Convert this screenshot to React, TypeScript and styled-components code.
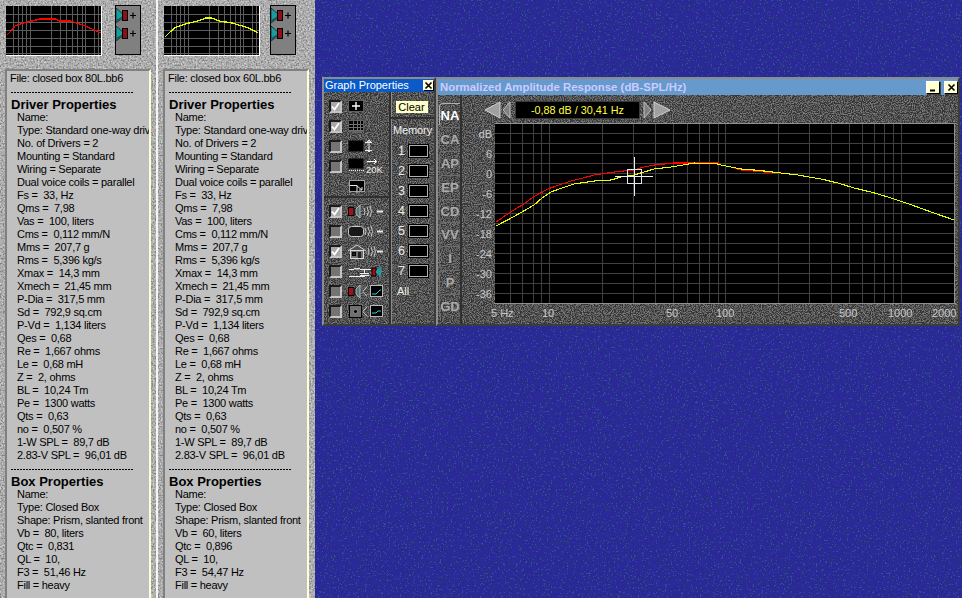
import styled, { createGlobalStyle } from "styled-components";

// speckle textures, drawn with an svg noise filter
const noise = (table: [string, string, string], freq: number, seed: number) => {
  const svg = `<svg xmlns='http://www.w3.org/2000/svg' width='300' height='300'><filter id='n' x='0' y='0' width='100%' height='100%' color-interpolation-filters='sRGB'><feTurbulence type='fractalNoise' baseFrequency='${freq}' numOctaves='2' seed='${seed}' stitchTiles='stitch'/><feColorMatrix type='matrix' values='2.2 0 0 0 -0.6 2.2 0 0 0 -0.6 2.2 0 0 0 -0.6 0 0 0 0 1'/><feComponentTransfer><feFuncR type='discrete' tableValues='${table[0]}'/><feFuncG type='discrete' tableValues='${table[1]}'/><feFuncB type='discrete' tableValues='${table[2]}'/></feComponentTransfer></filter><rect width='300' height='300' filter='url(#n)' shape-rendering='crispEdges'/></svg>`;
  return `url("data:image/svg+xml,${encodeURIComponent(svg)}")`;
};

const blueTexture = noise(["0.12 0.15 0.17 0.17 0.17 0.17 0.17 0.18 0.2", "0.24 0.16 0.16 0.16 0.16 0.16 0.16 0.18 0.3", "0.42 0.52 0.6 0.6 0.6 0.6 0.6 0.62 0.62"], 0.55, 3);
const stoneTexture = noise(["0.52 0.58 0.62 0.66 0.68 0.7 0.72 0.75 0.8", "0.52 0.58 0.62 0.66 0.68 0.7 0.72 0.75 0.8", "0.52 0.58 0.62 0.66 0.68 0.7 0.72 0.75 0.8"], 0.6, 8);
const darkTexture = noise(["0.2 0.2 0.22 0.26 0.34 0.38 0.4 0.44 0.5", "0.2 0.2 0.22 0.26 0.34 0.38 0.4 0.44 0.5", "0.2 0.2 0.22 0.26 0.34 0.38 0.4 0.44 0.5"], 0.9, 5);

const GlobalStyle = createGlobalStyle`
  html, body {
    margin: 0;
    padding: 0;
    background: #2c2c9c;
    overflow: hidden;
  }
  body {
    font-family: "Liberation Sans", Arial, sans-serif;
    font-size: 12px;
  }
`;

const Page = styled.div`
  display: flex;
  width: 962px;
  height: 598px;
  overflow: hidden;
  background: #2c2c9c ${blueTexture};
`;

const Column = styled.section<{ $last?: boolean }>`
  width: ${(p) => (p.$last ? "157px" : "158px")};
  height: 598px;
  box-sizing: border-box;
  padding: 5px 0 0 5px;
  background: #b0b0b0 ${stoneTexture};
  border-right: ${(p) => (p.$last ? "none" : "2px solid #f4f4f4")};
  flex-shrink: 0;
`;

const PreviewRow = styled.div`
  display: flex;
  align-items: flex-start;
  height: 64px;
`;

const Thumb = styled.svg`
  display: block;
  margin-top: 1px;
  margin-left: 1px;
  border-right: 1px solid #fff;
  border-bottom: 1px solid #fff;
`;

const PortBox = styled.svg<{ $gap: number }>`
  display: block;
  margin-left: ${(p) => p.$gap}px;
`;

const Sheet = styled.div`
  width: 146px;
  height: 540px;
  box-sizing: border-box;
  padding: 1px 0 0 3px;
  background: #c0c0c0;
  border-top: 2px solid #808080;
  border-left: 2px solid #808080;
  border-right: 2px solid #ffffd8;
  overflow: hidden;
  color: #000;
`;

const Line = styled.div<{ $indent?: boolean }>`
  height: 13px;
  line-height: 13px;
  font-size: 11px;
  letter-spacing: -0.26px;
  white-space: pre;
  padding-left: ${(p) => (p.$indent ? "7px" : "0")};
`;

const Heading = styled.div`
  height: 13px;
  line-height: 13px;
  font-size: 13px;
  font-weight: bold;
  white-space: pre;
  padding-left: 1px;
`;

const DashRule = styled.div`
  height: 13px;
  width: 122px;
  margin-left: 1px;
  background: repeating-linear-gradient(90deg, #000 0 2px, transparent 2px 3px) left 7px / 100% 1px no-repeat;
`;

const PropsWindow = styled.div`
  position: absolute;
  left: 322px;
  top: 77px;
  width: 114px;
  height: 249px;
  box-sizing: border-box;
  display: flex;
  flex-direction: column;
  background: #585858 ${darkTexture};
  border: 2px solid #3c3c3c;
  border-top-color: #8c8c8c;
  border-left-color: #8c8c8c;
  color: #e8e8e8;
`;

const PropsTitle = styled.div`
  display: flex;
  align-items: center;
  justify-content: space-between;
  height: 13px;
  flex-shrink: 0;
  padding-left: 1px;
  background: #0a5ac8;
  color: #fff;
  font-size: 11px;
  line-height: 13px;
`;

const TitleButton = styled.button<{ $big?: boolean }>`
  display: flex;
  align-items: center;
  justify-content: center;
  width: ${(p) => (p.$big ? "14px" : "11px")};
  height: ${(p) => (p.$big ? "13px" : "11px")};
  padding: 0;
  background: #ffffd0;
  color: #000;
  border: 1px solid #000;
  border-top-color: #fff;
  border-left-color: #fff;
  box-shadow: ${(p) => (p.$big ? "1px 1px 0 #404040" : "none")};
`;

const PropsBody = styled.div`
  flex: 1;
  display: flex;
  min-height: 0;
`;

const OptionColumn = styled.div`
  width: 65px;
  display: flex;
  flex-direction: column;
  border-right: 2px solid #303030;
  box-shadow: 1px 0 0 #8a8a8a;
`;

const OptionGroup = styled.div<{ $top?: boolean }>`
  display: flex;
  flex-direction: column;
  padding: ${(p) => (p.$top ? "4px" : "3px")} 0 0 5px;
  height: ${(p) => (p.$top ? "106px" : "auto")};
  box-sizing: border-box;
  border-bottom: ${(p) => (p.$top ? "2px solid #303030" : "none")};
`;

const OptionRow = styled.div`
  display: flex;
  align-items: center;
  height: 20px;
`;

const Check = styled.div<{ $empty?: boolean }>`
  width: 13px;
  height: 13px;
  box-sizing: border-box;
  flex-shrink: 0;
  display: flex;
  align-items: center;
  justify-content: center;
  background: ${(p) => (p.$empty ? "#747474" : "#a8a8a8")};
  border: 2px solid #c4c4c4;
  border-top-color: #1c1c1c;
  border-left-color: #1c1c1c;
`;

const OptionIcon = styled.svg<{ $blank?: boolean }>`
  display: block;
  flex-shrink: 0;
  margin-left: ${(p) => (p.$blank ? "20px" : "6px")};
`;

const MemoryColumn = styled.div`
  flex: 1;
  display: flex;
  flex-direction: column;
`;

const ClearArea = styled.div`
  height: 27px;
  box-sizing: border-box;
  display: flex;
  justify-content: center;
  padding: 9px 2px 0 0;
  border-bottom: 2px solid #303030;
`;

const ClearButton = styled.button`
  width: 32px;
  height: 12px;
  padding: 0;
  border: none;
  background: #ffffc8;
  color: #000;
  font-family: inherit;
  font-size: 11px;
  line-height: 12px;
`;

const MemoryLabel = styled.div`
  height: 22px;
  line-height: 22px;
  text-align: center;
  font-size: 11px;
  letter-spacing: -0.1px;
  color: #f0f0f0;
`;

const MemoryRow = styled.div`
  display: flex;
  align-items: center;
  height: 20px;
  padding-left: 7px;
  gap: 4px;
  font-size: 12.5px;
`;

const MemorySlot = styled.div`
  width: 19px;
  height: 12px;
  box-sizing: border-box;
  background: #000;
  border: 1px solid #b0b0b0;
  outline: 1px solid #000;
`;

const MemoryAll = styled.div`
  padding: 4px 0 0 6px;
  font-size: 11px;
  color: #f0f0f0;
`;

const GraphWindow = styled.div`
  position: absolute;
  left: 436px;
  top: 77px;
  width: 524px;
  height: 249px;
  box-sizing: border-box;
  display: flex;
  flex-direction: column;
  background: #585858 ${darkTexture};
  border: 2px solid #3c3c3c;
  border-top-color: #8c8c8c;
  border-left-color: #8c8c8c;
`;

const GraphTitle = styled.div`
  display: flex;
  align-items: center;
  gap: 4px;
  height: 16px;
  flex-shrink: 0;
  padding: 0 0 0 2px;
  background: #6699cc;
`;

const GraphTitleText = styled.div`
  flex: 1;
  color: #ccccff;
  font-size: 11.4px;
  font-weight: bold;
  white-space: nowrap;
`;

const GraphBody = styled.div`
  flex: 1;
  display: flex;
  min-height: 0;
`;

const TabStrip = styled.div`
  width: 22px;
  flex-shrink: 0;
  display: flex;
  flex-direction: column;
  padding-top: 8px;
  border-right: 2px solid #303030;
`;

const Tab = styled.div<{ $active?: boolean }>`
  height: 23.9px;
  margin-left: 1px;
  box-sizing: border-box;
  line-height: 23px;
  text-align: center;
  font-size: 13px;
  font-weight: bold;
  color: ${(p) => (p.$active ? "#ffffff" : "#aaaaaa")};
  border-top: 1px solid ${(p) => (p.$active ? "#b0b0b0" : "#6c6c6c")};
  border-left: 1px solid ${(p) => (p.$active ? "#b0b0b0" : "#6c6c6c")};
  border-radius: 4px 0 0 4px;
`;

const GraphMain = styled.div`
  flex: 1;
  display: flex;
  flex-direction: column;
  min-width: 0;
`;

const NavRow = styled.div`
  display: flex;
  align-items: center;
  height: 26px;
  box-sizing: border-box;
  padding: 3px 0 0 22px;
  flex-shrink: 0;
`;

const NavArrow = styled.svg<{ $gap?: number }>`
  display: block;
  flex-shrink: 0;
  margin-left: ${(p) => p.$gap ?? 0}px;
`;

const Readout = styled.div`
  width: 125px;
  height: 18px;
  margin: 0 2px 0 3px;
  box-sizing: border-box;
  background: #000;
  border: 1px solid #3a3a3a;
  color: #ffff40;
  font-size: 10.8px;
  line-height: 16px;
  text-align: center;
  white-space: nowrap;
`;

const ChartSvg = styled.svg`
  display: block;
  flex-shrink: 0;
`;

const ChartLabel = styled.text`
  fill: #c8c8c8;
  font-family: "Liberation Sans", Arial, sans-serif;
  font-size: 11px;
`;

const driverRows = [
  "Name:",
  "Type: Standard one-way driver",
  "No. of Drivers = 2",
  "Mounting = Standard",
  "Wiring = Separate",
  "Dual voice coils = parallel",
  "Fs =  33, Hz",
  "Qms =  7,98",
  "Vas =  100, liters",
  "Cms =  0,112 mm/N",
  "Mms =  207,7 g",
  "Rms =  5,396 kg/s",
  "Xmax =  14,3 mm",
  "Xmech =  21,45 mm",
  "P-Dia =  317,5 mm",
  "Sd =  792,9 sq.cm",
  "P-Vd =  1,134 liters",
  "Qes =  0,68",
  "Re =  1,667 ohms",
  "Le =  0,68 mH",
  "Z =  2, ohms",
  "BL =  10,24 Tm",
  "Pe =  1300 watts",
  "Qts =  0,63",
  "no =  0,507 %",
  "1-W SPL =  89,7 dB",
  "2.83-V SPL =  96,01 dB",
];

interface BoxFile {
  file: string;
  vb: string;
  qtc: string;
  f3: string;
  color: string;
  curve: string;
}

const files: BoxFile[] = [
  {
    file: "File: closed box 80L.bb6",
    vb: "80",
    qtc: "0,831",
    f3: "51,46",
    color: "#ff0000",
    curve: "1,29 5,25 9,20 17,17 26,15 34,13 49,13 54,15 64,15 77,19 86,23 95,27",
  },
  {
    file: "File: closed box 60L.bb6",
    vb: "60",
    qtc: "0,896",
    f3: "54,47",
    color: "#e4ff00",
    curve: "1,31 6,26 12,21 25,17 34,15 42,12 48,12 55,15 68,17 85,22 94,27",
  },
];

const redCurve =
  "495,222 508,213 521,205 534,196 547,189 558,185 570,181 582,178 593,175 613,172 633,170 643,167 653,165 663,164 673,163 693,163 717,163 720,165 730,167 740,170 753,171 763,172 780,173";
const yellowCurve =
  "495,226 514,216 533,205 541,198 550,192 561,188 573,184 593,181 610,180 620,177 633,175 643,172 653,169 670,167 682,165 693,163 717,164 720,165 730,167 740,169 753,170 763,171 780,173 797,175 808,177 820,179 837,183 853,188 870,192 887,197 908,204 930,212 953,220";

const vLines = [509, 521, 532, 540, 548, 601, 632, 654, 672, 686, 698, 708, 717, 724, 777, 808, 830, 848, 861, 873, 883, 892, 900];
const hLines = Array.from({ length: 17 }, (_, i) => 134 + i * 10);
const dbLabels: [string, number][] = [
  ["dB", 134],
  ["6", 154],
  ["0", 174],
  ["-6", 194],
  ["-12", 214],
  ["-18", 234],
  ["-24", 254],
  ["-30", 274],
  ["-36", 294],
];
const hzLabels: [string, number][] = [
  ["5 Hz", 490],
  ["10", 541],
  ["50", 665],
  ["100", 715],
  ["500", 838],
  ["1000", 887],
  ["2000", 931],
];
const tabs = ["NA", "CA", "AP", "EP", "CD", "VV", "I", "P", "GD"];

const ThumbChart = ({ color, curve }: { color: string; curve: string }) => {
  const xs = [7, 12, 16, 20, 24, 45, 54, 60, 66, 71, 76, 79, 88, 92];
  const ys = [8, 16, 24, 32, 40, 47];
  return (
    <Thumb width="95" height="49" viewBox="0 0 95 49" shapeRendering="crispEdges">
      <rect width="95" height="49" fill="#000" />
      {xs.map((x) => (
        <path key={x} d={`M${x} 0V49`} stroke="#5c5c5c" />
      ))}
      {ys.map((y) => (
        <path key={y} d={`M0 ${y}H95`} stroke="#5c5c5c" />
      ))}
      <polyline points={curve} fill="none" stroke={color} strokeWidth="1.3" />
    </Thumb>
  );
};

const Driver = ({ y }: { y: number }) => (
  <g transform={`translate(0 ${y})`}>
    <path d="M1 0L8 6V10L1 15Z" fill="#1c9c9c" stroke="#000" strokeWidth=".6" />
    <path d="M1 15L8 10V8L1 12Z" fill="#205858" />
    <rect x="7.500" y="2.500" width="5" height="10" fill="#8c1018" stroke="#000" />
    <path d="M15 7.500h6M18 4.500v6" stroke="#000" strokeWidth="1.200" />
  </g>
);

const Ports = ({ gap }: { gap: number }) => (
  <PortBox $gap={gap} width="26" height="50" viewBox="0 0 26 50">
    <rect x=".5" y=".5" width="25" height="49" fill="#808080" stroke="#000" />
    <Driver y={3} />
    <Driver y={21} />
  </PortBox>
);

const Waves = ({ x }: { x: number }) => (
  <g fill="none" stroke="#c8c8c8">
    <path d={`M${x} 4q2 3.500 0 7M${x + 3} 3q3 4.500 0 9M${x + 6} 2q3 5.500 0 11`} />
    <path d="M29 7.500h6" stroke="#e8e8e8" strokeWidth="2" />
  </g>
);

const Speaker = () => (
  <g>
    <rect x=".5" y="3.500" width="5" height="8" fill="#a01018" stroke="#000" />
    <rect x="5" y="4" width="3" height="7" fill="#202020" />
    <path d="M8 5l4-4v13l-4-4z" fill="#587878" stroke="#c8c8c8" strokeWidth=".8" />
  </g>
);

const MiniGraph = ({ low }: { low?: boolean }) => (
  <g>
    <rect x="22.500" y="1.500" width="12" height="11" fill="#000" stroke="#b8b8b8" />
    <path d={low ? "M24 9h4l2-2h3" : "M24 10h4l4-4h1"} stroke="#20d8f0" fill="none" />
  </g>
);

const Wedge = () => <path d="M19 2.500l-4 5 4 5" stroke="#c8c8c8" fill="none" />;

const icons: Record<string, React.ReactNode> = {
  sealed: (
    <>
      <Speaker />
      <Waves x={16} />
    </>
  ),
  vented: (
    <>
      <rect x=".5" y="2.500" width="15" height="10" rx="3" fill="#181818" stroke="#c8c8c8" />
      <Waves x={17} />
    </>
  ),
  room: (
    <>
      <path d="M0 7L9 1L18 7" fill="#505050" stroke="#d8d8d8" />
      <rect x="2.500" y="6.500" width="13" height="8" fill="#707070" stroke="#d8d8d8" />
      <rect x="4.500" y="8.500" width="3" height="3" fill="#202020" stroke="#000" />
      <rect x="10" y="8" width="3" height="6" fill="#202020" />
      <Waves x={20} />
    </>
  ),
  crossover: (
    <>
      <path d="M1 5.500h5q1-3 2 0q1-3 2 0q1-3 2 0h11M1 12.500h16M16.500 6v3M12 9.500h9M12 11.500h9M16.500 12v1" fill="none" stroke="#f0f0f0" />
      <rect x="24" y="4" width="4" height="8" fill="#a01018" stroke="#000" />
      <path d="M28 7l5-5v11l-5-4z" fill="#1c9c9c" />
    </>
  ),
  excursion: (
    <>
      <Speaker />
      <Wedge />
      <MiniGraph />
    </>
  ),
  port: (
    <>
      <rect x="1.500" y="1.500" width="12" height="12" fill="#707070" stroke="#000" />
      <circle cx="7.500" cy="7.500" r="2" fill="#000" stroke="#b0b0b0" strokeWidth=".6" />
      <Wedge />
      <MiniGraph low />
    </>
  ),
};

const topIcons: Record<string, React.ReactNode> = {
  cross: (
    <>
      <rect x="0.5" y="1.500" width="15" height="11" fill="#000" stroke="#606060" />
      <path d="M8 3v8M4 7h8" stroke="#fff" strokeWidth="1.400" />
    </>
  ),
  grid: (
    <>
      <rect x="0.5" y="1.500" width="15" height="11" fill="#000" stroke="#606060" />
      <path d="M1 5.500h14M1 8.500h14M1 11.500h14M5.500 2v10M9.500 2v10M12.500 2v10" stroke="#707070" />
    </>
  ),
  scaleY: (
    <>
      <rect x="0.5" y="1.500" width="15" height="11" fill="#000" />
      <path d="M17 3.500h7M17 11.500h7M21 1v12M19 3l2-2 2 2M19 11l2 2 2-2" stroke="#e8e8e8" fill="none" />
    </>
  ),
  scaleX: (
    <>
      <rect x="0.5" y="0.500" width="15" height="10" fill="#000" />
      <path d="M1 12.500h15" stroke="#e8e8e8" strokeDasharray="1 1" />
      <path d="M19 3.500h9M26 1l2.500 2.500-2.500 2.500" stroke="#fff" fill="none" />
      <text x="18" y="15" fill="#f0f0f0" fontFamily="Liberation Sans" fontSize="9.500">20K</text>
    </>
  ),
  zoom: (
    <>
      <rect x="0.5" y="1.500" width="15" height="11" fill="#000" stroke="#a0a0a0" />
      <path d="M1 6.500h7v6M8 7l5 4M13 8v3h-3" stroke="#e8e8e8" fill="none" />
    </>
  ),
};

const CheckMark = () => (
  <svg width="9" height="9" viewBox="0 0 9 9">
    <path d="M1 4.500L3.500 7.500L8 1" fill="none" stroke="#fff" strokeWidth="1.800" />
  </svg>
);

const Close = () => (
  <svg width="9" height="9" viewBox="0 0 9 9">
    <path d="M1.500 1.500L7.500 7.500M7.500 1.500L1.500 7.500" stroke="#000" strokeWidth="1.600" />
  </svg>
);

const Minimize = () => (
  <svg width="9" height="9" viewBox="0 0 9 9">
    <path d="M1 7.500H6" stroke="#000" strokeWidth="2" />
  </svg>
);

const BoxColumn = ({ data, last }: { data: BoxFile; last?: boolean }) => (
  <Column $last={last}>
    <PreviewRow>
      <ThumbChart color={data.color} curve={data.curve} />
      <Ports gap={last ? 10 : 13} />
    </PreviewRow>
    <Sheet>
      <Line>{data.file}</Line>
      <DashRule />
      <Heading>Driver Properties</Heading>
      {driverRows.map((row) => (
        <Line $indent key={row}>
          {row}
        </Line>
      ))}
      <DashRule />
      <Heading>Box Properties</Heading>
      <Line $indent>Name:</Line>
      <Line $indent>Type: Closed Box</Line>
      <Line $indent>Shape: Prism, slanted front</Line>
      <Line $indent>{`Vb =  ${data.vb}, liters`}</Line>
      <Line $indent>{`Qtc =  ${data.qtc}`}</Line>
      <Line $indent>{"QL =  10,"}</Line>
      <Line $indent>{`F3 =  ${data.f3} Hz`}</Line>
      <Line $indent>Fill = heavy</Line>
    </Sheet>
  </Column>
);

const App = () => {
  return (
    <Page>
      <GlobalStyle />
      <BoxColumn data={files[0]} />
      <BoxColumn data={files[1]} last />

      <PropsWindow>
        <PropsTitle>
          Graph Properties
          <TitleButton>
            <Close />
          </TitleButton>
        </PropsTitle>
        <PropsBody>
          <OptionColumn>
            <OptionGroup $top>
              <OptionRow>
                <Check>
                  <CheckMark />
                </Check>
                <OptionIcon width="30" height="14" viewBox="0 0 30 14">{topIcons.cross}</OptionIcon>
              </OptionRow>
              <OptionRow>
                <Check>
                  <CheckMark />
                </Check>
                <OptionIcon width="30" height="14" viewBox="0 0 30 14">{topIcons.grid}</OptionIcon>
              </OptionRow>
              <OptionRow>
                <Check $empty />
                <OptionIcon width="30" height="14" viewBox="0 0 30 14">{topIcons.scaleY}</OptionIcon>
              </OptionRow>
              <OptionRow>
                <Check $empty />
                <OptionIcon width="36" height="16" viewBox="0 0 36 16">{topIcons.scaleX}</OptionIcon>
              </OptionRow>
              <OptionRow>
                <OptionIcon $blank width="30" height="14" viewBox="0 0 30 14">{topIcons.zoom}</OptionIcon>
              </OptionRow>
            </OptionGroup>
            <OptionGroup>
              {Object.keys(icons).map((name) => (
                <OptionRow key={name}>
                  {name === "sealed" || name === "room" ? (
                    <Check>
                      <CheckMark />
                    </Check>
                  ) : (
                    <Check $empty />
                  )}
                  <OptionIcon width="36" height="15" viewBox="0 0 36 15">
                    {icons[name]}
                  </OptionIcon>
                </OptionRow>
              ))}
            </OptionGroup>
          </OptionColumn>
          <MemoryColumn>
            <ClearArea>
              <ClearButton>Clear</ClearButton>
            </ClearArea>
            <MemoryLabel>Memory</MemoryLabel>
            {[1, 2, 3, 4, 5, 6, 7].map((n) => (
              <MemoryRow key={n}>
                {n}
                <MemorySlot />
              </MemoryRow>
            ))}
            <MemoryAll>All</MemoryAll>
          </MemoryColumn>
        </PropsBody>
      </PropsWindow>

      <GraphWindow>
        <GraphTitle>
          <GraphTitleText>Normalized Amplitude Response (dB-SPL/Hz)</GraphTitleText>
          <TitleButton $big>
            <Minimize />
          </TitleButton>
          <TitleButton $big>
            <Close />
          </TitleButton>
        </GraphTitle>
        <GraphBody>
          <TabStrip>
            {tabs.map((t, i) => (
              <Tab key={t} $active={i === 0}>
                {t}
              </Tab>
            ))}
          </TabStrip>
          <GraphMain>
            <NavRow>
              <NavArrow width="17" height="18" viewBox="0 0 17 18">
                <path d="M16 1V17L1 9Z" fill="#a0a0a0" stroke="#d0d0d0" />
              </NavArrow>
              <NavArrow $gap={1} width="10" height="18" viewBox="0 0 10 18">
                <path d="M8 1V17L1 9Z" fill="#808080" stroke="#c0c0c0" />
              </NavArrow>
              <Readout>-0,88 dB / 30,41 Hz</Readout>
              <NavArrow width="10" height="18" viewBox="0 0 10 18">
                <path d="M2 1V17L9 9Z" fill="#808080" stroke="#c0c0c0" />
              </NavArrow>
              <NavArrow $gap={1} width="18" height="18" viewBox="0 0 18 18">
                <path d="M1 1V17L17 9Z" fill="#a0a0a0" stroke="#d0d0d0" />
              </NavArrow>
            </NavRow>
            <ChartSvg width="498" height="203" viewBox="461 121 498 203">
              <g shapeRendering="crispEdges">
                <rect x="494" y="124" width="459" height="179" fill="#000" />
                <path d="M494 123.500H955M953.500 124V304M493 303.500H955" stroke="#909090" strokeWidth="1" />
                {vLines.map((x) => (
                  <path key={x} d={`M${x + 0.5} 124V303`} stroke="#404040" />
                ))}
                {hLines.map((y) => (
                  <path key={y} d={`M494 ${y - 0.5}H953`} stroke="#404040" />
                ))}
              </g>
              <polyline points={redCurve} fill="none" stroke="#ff0000" strokeWidth="1.100" shapeRendering="crispEdges" />
              <polyline points={yellowCurve} fill="none" stroke="#e8ff00" strokeWidth="1.100" shapeRendering="crispEdges" />
              <g shapeRendering="crispEdges" fill="none">
                <path d="M615 176.500H626" stroke="#3030e0" />
                <path d="M634 169.500H641M640.500 170V174" stroke="#30e0f0" />
                <path d="M614 176.500H652M633.500 157V196" stroke="#f0f0f0" />
                <rect x="626.500" y="169.500" width="14" height="14" stroke="#d8e8f8" />
              </g>
              {dbLabels.map(([label, y]) => (
                <ChartLabel key={label} x="491" y={y + 4} textAnchor="end">
                  {label}
                </ChartLabel>
              ))}
              {hzLabels.map(([label, x]) => (
                <ChartLabel key={label} x={x} y="317">
                  {label}
                </ChartLabel>
              ))}
            </ChartSvg>
          </GraphMain>
        </GraphBody>
      </GraphWindow>
    </Page>
  );
};

export default App;
